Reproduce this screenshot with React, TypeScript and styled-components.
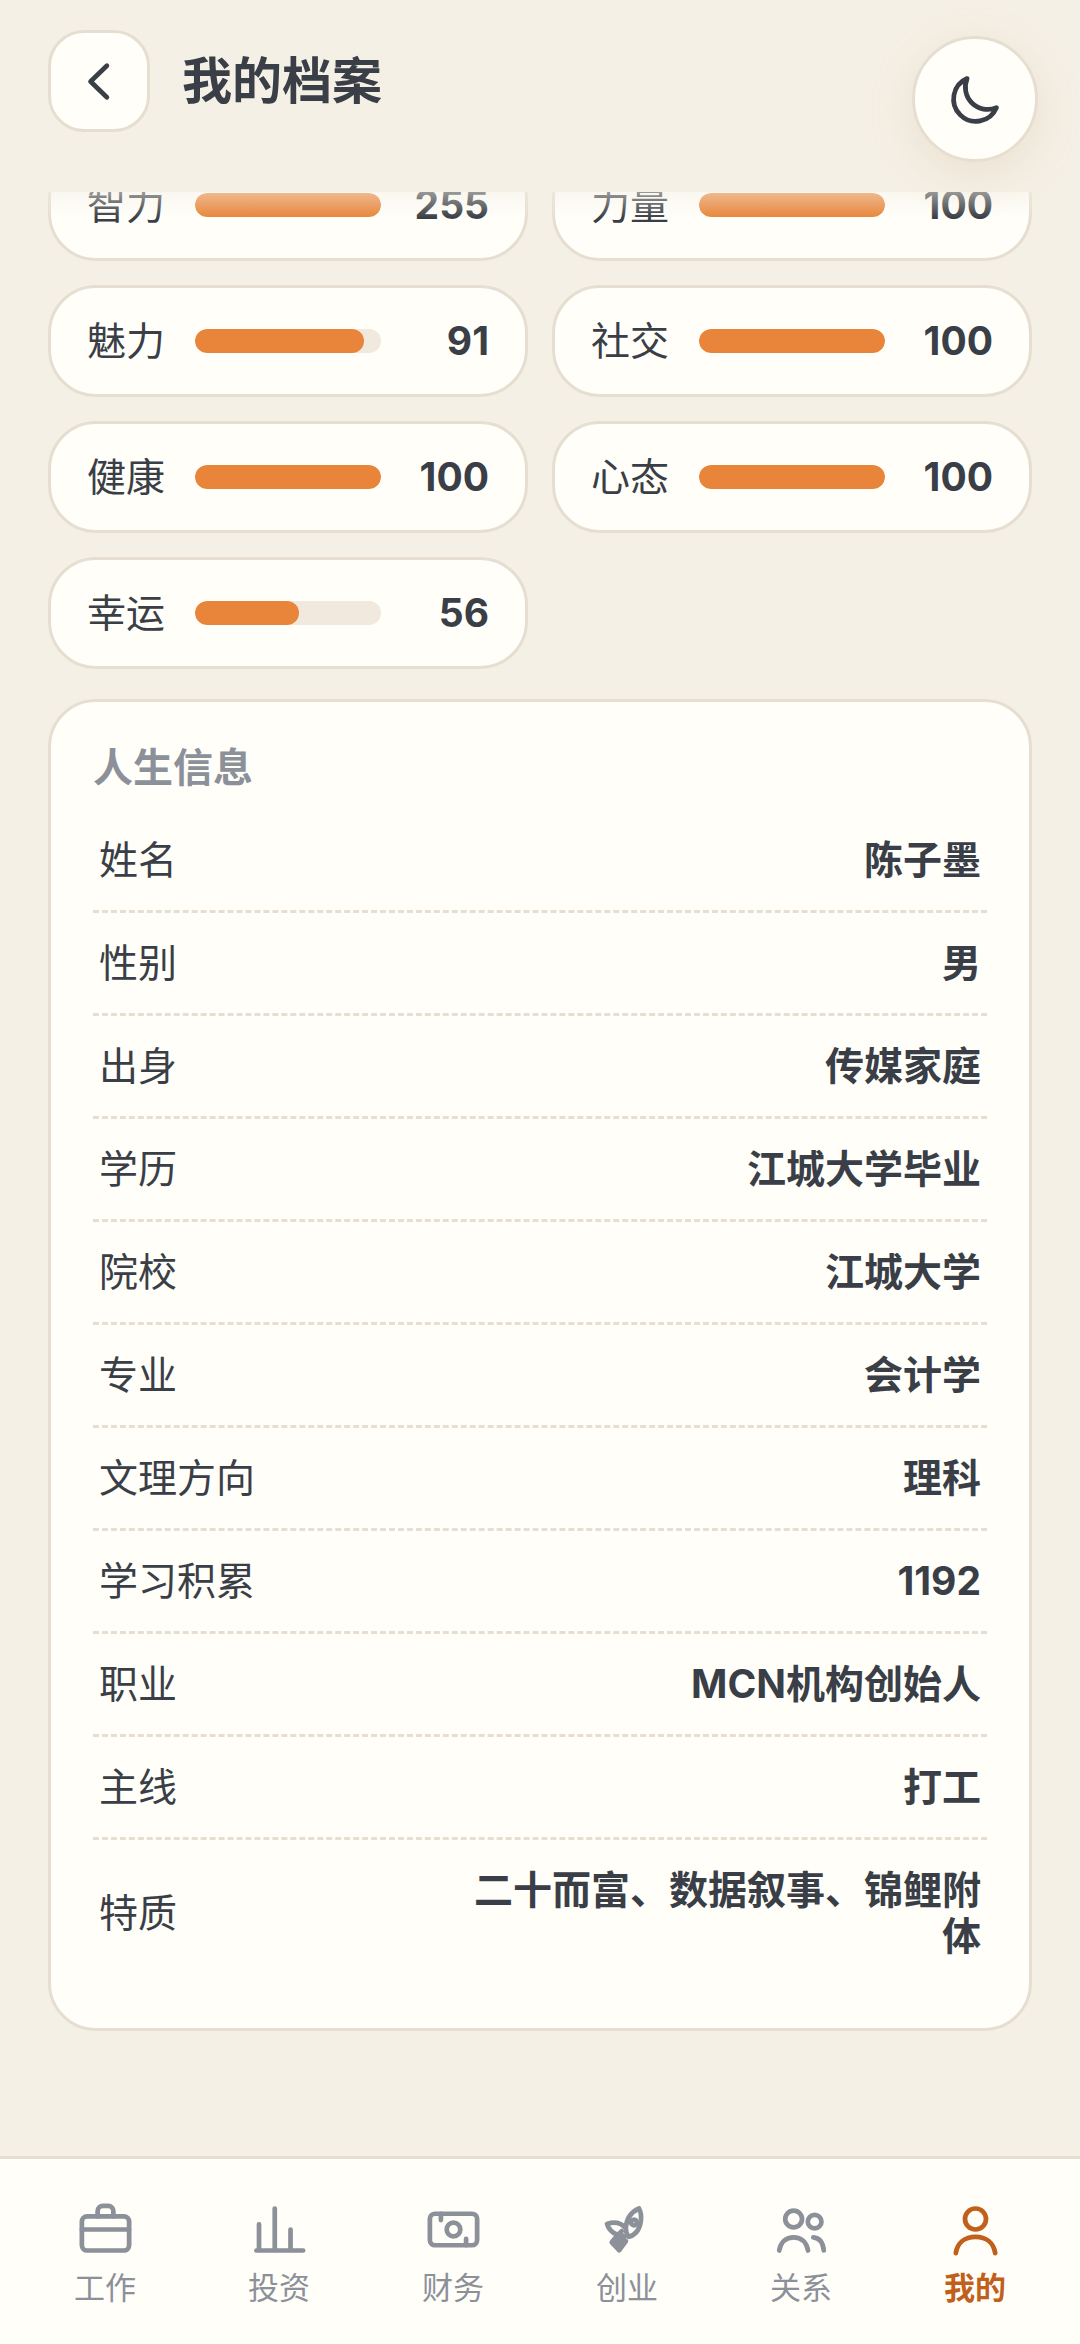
import React from "react";
import styled, { createGlobalStyle } from "styled-components";

const color = {
  page: "#f5f0e6",
  card: "#fffef9",
  line: "#e6dfd1",
  ink: "#3a3f47",
  muted: "#8b9099",
  accent: "#e8853a",
  active: "#c0601a",
  track: "#f1e9dd",
};

const GlobalStyle = createGlobalStyle`
  *, *::before, *::after { box-sizing: border-box; }
  body {
    margin: 0;
    background: ${color.page};
    color: ${color.ink};
    font-family: Inter, "Noto Sans CJK SC", sans-serif;
    font-size: 39px;
    line-height: 46px;
  }
`;

const Screen = styled.div`
  display: flex;
  flex-direction: column;
  min-height: 100vh;
`;

const Header = styled.header`
  position: sticky;
  top: 0;
  z-index: 2;
  display: flex;
  align-items: center;
  gap: 32px;
  padding: 30px 48px 60px;
  background: ${color.page};

  &::after {
    content: "";
    position: absolute;
    top: 100%;
    left: 0;
    right: 0;
    height: 26px;
    background: linear-gradient(rgba(245, 240, 230, 0.5), rgba(245, 240, 230, 0));
    pointer-events: none;
  }
`;

const BackButton = styled.button`
  display: grid;
  place-items: center;
  width: 102px;
  height: 102px;
  padding: 0;
  border: 3px solid ${color.line};
  border-radius: 36px;
  background: ${color.card};
  color: inherit;
`;

const Title = styled.h1`
  margin: 0;
  font-size: 50px;
  line-height: 60px;
  font-weight: 700;
`;

const ThemeButton = styled.button`
  position: fixed;
  top: 36px;
  right: 42px;
  z-index: 3;
  display: grid;
  place-items: center;
  width: 126px;
  height: 126px;
  padding: 0;
  border: 3px solid ${color.line};
  border-radius: 50%;
  background: ${color.card};
  color: inherit;
  box-shadow: 0 12px 48px rgba(190, 140, 90, 0.16);
`;

const Main = styled.main`
  flex: 1;
  display: flex;
  flex-direction: column;
  gap: 30px;
  margin-top: -43px;
  padding: 0 48px 48px;
`;

const StatGrid = styled.section`
  display: grid;
  grid-template-columns: 1fr 1fr;
  gap: 24px;
`;

const StatCard = styled.div`
  display: flex;
  align-items: center;
  gap: 30px;
  height: 112px;
  padding: 0 36px;
  border: 3px solid ${color.line};
  border-radius: 48px;
  background: ${color.card};
`;

const StatName = styled.span`
  font-weight: 400;
`;

const Track = styled.div`
  flex: 1;
  height: 24px;
  border-radius: 12px;
  background: ${color.track};
  overflow: hidden;
`;

const Fill = styled.div`
  height: 100%;
  border-radius: 12px;
  background: ${color.accent};
`;

const StatValue = styled.span`
  min-width: 78px;
  font-weight: 700;
  text-align: right;
`;

const Panel = styled.section`
  padding: 42px;
  border: 3px solid ${color.line};
  border-radius: 48px;
  background: ${color.card};
`;

const PanelTitle = styled.h2`
  margin: 0 0 18px;
  color: ${color.muted};
  font-size: 40px;
  line-height: 48px;
  font-weight: 700;
`;

const InfoList = styled.dl`
  margin: 0;
`;

const InfoRow = styled.div`
  display: flex;
  align-items: center;
  justify-content: space-between;
  padding: 27px 6px;

  &:not(:last-child) {
    border-bottom: 3px dashed ${color.line};
  }
`;

const InfoName = styled.dt`
  font-weight: 400;
`;

const InfoValue = styled.dd`
  max-width: 60%;
  margin: 0;
  font-weight: 700;
  text-align: right;
`;

const TabBar = styled.nav`
  position: sticky;
  bottom: 0;
  display: grid;
  grid-template-columns: repeat(6, 1fr);
  padding: 39px 18px 37px;
  border-top: 3px solid ${color.line};
  background: ${color.card};
`;

const Tab = styled.a<{ $active?: boolean }>`
  display: flex;
  flex-direction: column;
  align-items: center;
  gap: 8px;
  color: ${(p) => (p.$active ? color.active : color.muted)};
  font-size: 31px;
  line-height: 38px;
  font-weight: ${(p) => (p.$active ? 700 : 400)};
  text-decoration: none;
`;

const Icon = styled.svg.attrs({ viewBox: "0 0 24 24", "aria-hidden": true })`
  display: block;
  width: 63px;
  height: 63px;
  fill: none;
  stroke: currentColor;
  stroke-width: 1.8;
  stroke-linecap: round;
  stroke-linejoin: round;
`;

const stats = [
  { name: "智力", value: 255 },
  { name: "力量", value: 100 },
  { name: "魅力", value: 91 },
  { name: "社交", value: 100 },
  { name: "健康", value: 100 },
  { name: "心态", value: 100 },
  { name: "幸运", value: 56 },
];

const info = [
  ["姓名", "陈子墨"],
  ["性别", "男"],
  ["出身", "传媒家庭"],
  ["学历", "江城大学毕业"],
  ["院校", "江城大学"],
  ["专业", "会计学"],
  ["文理方向", "理科"],
  ["学习积累", "1192"],
  ["职业", "MCN机构创始人"],
  ["主线", "打工"],
  ["特质", "二十而富、数据叙事、锦鲤附体"],
];

const tabs = [
  {
    label: "工作",
    icon: (
      <>
        <rect x="3" y="7" width="18" height="13" rx="2" />
        <path d="M9 7V5a2 2 0 0 1 2-2h2a2 2 0 0 1 2 2v2M3 12h18" />
      </>
    ),
  },
  {
    label: "投资",
    icon: <path d="M3.2 20h17.8M4.2 20V10M10.2 20V4M16.2 20v-8" />,
  },
  {
    label: "财务",
    icon: (
      <>
        <rect x="3" y="6" width="18" height="12" rx="2" />
        <circle cx="12" cy="12" r="2.6" />
        <path d="M7.2 6v2.4M16.8 18v-2.4" />
      </>
    ),
  },
  {
    label: "创业",
    icon: (
      <>
        <path d="M16.4 4c-2.9 1.3-4.7 3.9-5 7-.1 1.4.2 2.8 1.1 3.8 2.7-.8 4.2-3.3 4.6-6.1.2-1.7 0-3.4-.7-4.7z" />
        <circle cx="14.5" cy="9.3" r="1.1" />
        <path d="M11.2 11.3C9.2 9.2 6.8 9 4.2 9.9c.6 1.9 1.9 3.3 3.8 4M8.2 14.2l1.6-1.6M8.2 14.2l-2.2 2.7 2.8 3 2.6-3.5zM7.4 17.2l1.8-1.6M8.8 18.6l1-2.4M8.6 16.4l.8.8M9.2 13.6l1.6 1.2" />
      </>
    ),
  },
  {
    label: "关系",
    icon: (
      <>
        <circle cx="9" cy="8" r="3.2" />
        <circle cx="17" cy="9" r="2.6" />
        <path d="M3.5 20c.6-3.2 2.6-5 5.5-5s4.9 1.8 5.5 5M16.5 15c2.4.2 3.7 2 4 5" />
      </>
    ),
  },
  {
    label: "我的",
    active: true,
    icon: (
      <>
        <circle cx="12" cy="8" r="4" />
        <path d="M4.5 21c.6-4 3.5-6.2 7.5-6.2s6.9 2.2 7.5 6.2" />
      </>
    ),
  },
];

export default function App() {
  return (
    <Screen>
      <GlobalStyle />
      <Header>
        <BackButton type="button" aria-label="返回">
          <Icon>
            <path d="M14.8 6l-6.2 6 6.2 6" />
          </Icon>
        </BackButton>
        <Title>我的档案</Title>
      </Header>
      <ThemeButton type="button" aria-label="深色模式">
        <Icon>
          <path d="M20 15.1A8.5 8.5 0 0 1 8.8 4a8.5 8.5 0 1 0 11.2 11.1z" />
        </Icon>
      </ThemeButton>

      <Main>
        <StatGrid>
          {stats.map((s) => (
            <StatCard key={s.name}>
              <StatName>{s.name}</StatName>
              <Track>
                <Fill style={{ width: `${Math.min(s.value, 100)}%` }} />
              </Track>
              <StatValue>{s.value}</StatValue>
            </StatCard>
          ))}
        </StatGrid>

        <Panel>
          <PanelTitle>人生信息</PanelTitle>
          <InfoList>
            {info.map(([name, value]) => (
              <InfoRow key={name}>
                <InfoName>{name}</InfoName>
                <InfoValue>{value}</InfoValue>
              </InfoRow>
            ))}
          </InfoList>
        </Panel>
      </Main>

      <TabBar>
        {tabs.map((t) => (
          <Tab
            key={t.label}
            href="#"
            $active={t.active}
            aria-current={t.active ? "page" : undefined}
          >
            <Icon>{t.icon}</Icon>
            {t.label}
          </Tab>
        ))}
      </TabBar>
    </Screen>
  );
}
